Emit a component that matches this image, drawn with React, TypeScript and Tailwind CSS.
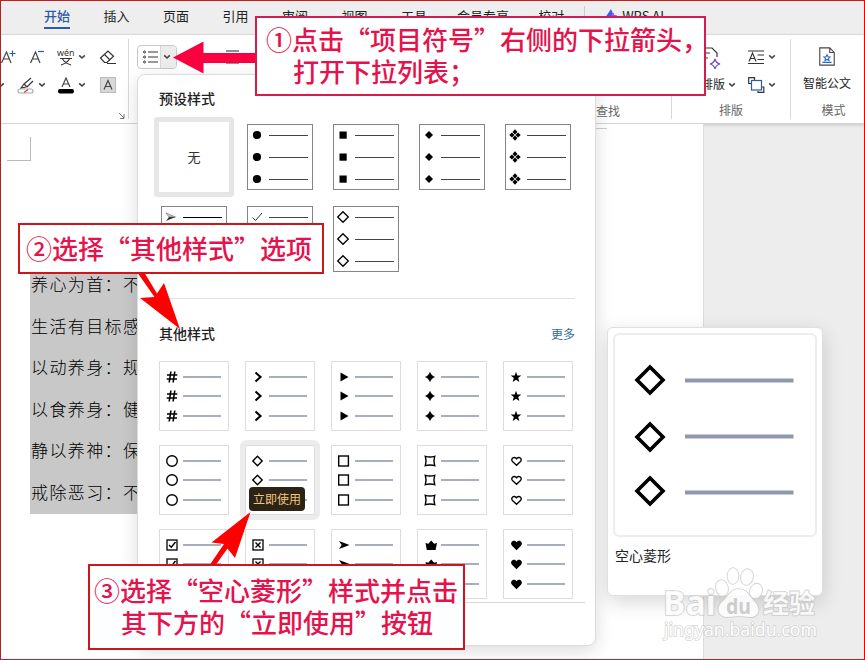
import React from "react";

const SANS = "font-['Noto_Sans_CJK_SC','Noto_Sans',sans-serif]";

function Chevron({ className = "" }: { className?: string }) {
  return (
    <svg className={`shrink-0 ${className}`} width="8" height="6" viewBox="0 0 8 6" fill="none" stroke="#444" strokeWidth="1.600">
      <path d="M1.200 1.300 4 4l2.800-2.700" />
    </svg>
  );
}

type Kind =
  | "disc" | "square" | "diamond" | "cluster" | "arrow" | "check" | "openDiamondLg"
  | "hash" | "angle" | "triangle" | "spark" | "star"
  | "ring" | "openDiamond" | "openSquare" | "bracket" | "heart"
  | "boxCheck" | "boxCross" | "dart" | "crown" | "heartFill";

function Bullet({ kind }: { kind: Kind }) {
  const line = { fill: "none", stroke: "#000", strokeWidth: 1.4 };
  const shapes: Record<Kind, React.ReactNode> = {
    disc: <circle cx="8" cy="8" r="4.100" />,
    square: <rect x="4.500" y="4.500" width="7.200" height="7.200" />,
    diamond: <path d="M8 4 12 8 8 12 4 8Z" />,
    cluster: <path d="M8 2.300 10.500 4.900 8 7.500 5.500 4.900ZM8 8.500l2.500 2.600L8 13.700l-2.500-2.600ZM4.900 5.500 7.500 8l-2.600 2.500L2.300 8ZM11.100 5.500 13.700 8l-2.600 2.500L8.500 8Z" />,
    arrow: (
      <>
        <path d="M3 4 12.500 8H6Z" fill="#ccc" stroke="#777" strokeWidth=".7" />
        <path d="M6 8h6.500L3 12Z" fill="#333" />
      </>
    ),
    check: <path d="m3.500 8.500 3 3L13 4" fill="none" stroke="#333" />,
    openDiamondLg: <path d="m8 2.700 5.300 5.300L8 13.300 2.700 8Z" {...line} strokeWidth="1.300" />,
    hash: <path d="M6.900 2.500 5.200 13.500M10.800 2.500 9.100 13.500M3 6h10.300M2.700 10h10.300" {...line} strokeWidth="1.600" />,
    angle: <path d="m5.500 3.500 5 4.500-5 4.500" {...line} strokeWidth="2.100" />,
    triangle: <path d="M4.500 3.500 12.500 8l-8 4.500Z" />,
    spark: <path d="M8 2.800q1.300 3.900 5.200 5.200Q9.300 9.300 8 13.200 6.700 9.300 2.800 8 6.700 6.700 8 2.800Z" />,
    star: <path d="m8 2.700 1.300 3.700 4 .1-3.100 2.500 1.100 4L8 10.700l-3.300 2.300 1.100-4-3.100-2.500 4-.1Z" />,
    ring: <circle cx="8" cy="8" r="5.300" {...line} />,
    openDiamond: <path d="m7.500 3.300 4.700 4.700-4.700 4.700L2.800 8Z" {...line} />,
    openSquare: <rect x="2.700" y="3" width="9.700" height="10" {...line} />,
    bracket: <path d="M3.300 3.300q4.700 1.500 9.400 0-1.500 4.700 0 9.400-4.700-1.500-9.400 0 1.500-4.700 0-9.400Z" {...line} />,
    heart: <path d="M8.500 12.300 4.500 8.500C2.200 6.200 5.900 2.500 8.500 5.700c2.600-3.200 6.300.5 4 2.800Z" {...line} />,
    boxCheck: (
      <g {...line}>
        <rect x="3" y="3" width="10" height="10" strokeWidth="1.300" />
        <path d="m5 8 2.300 2.300L11.500 5" />
      </g>
    ),
    boxCross: (
      <g {...line}>
        <rect x="3" y="3" width="10" height="10" strokeWidth="1.300" />
        <path d="m5.500 5.500 5 5m0-5-5 5" />
      </g>
    ),
    dart: <path d="M3 4 13.500 8 3 12l2.700-4Z" />,
    crown: <path d="m3.500 6 2.800.8L9.200 3.500 12.100 6.800 15 6l-1.400 7H4.800Z" />,
    heartFill: <path d="M8.500 13.300 4 8.700C1.200 5.800 5.500 1.700 8.500 5.200c3-3.500 7.300.6 4.500 3.500Z" />,
  };
  return (
    <svg width="16" height="16" viewBox="0 0 16 16" className="shrink-0">
      {shapes[kind]}
    </svg>
  );
}

function PresetCell({ kind, dark }: { kind: Kind; dark?: boolean }) {
  return (
    <div className="h-[66px] w-[66px] border border-[#858585] bg-white">
      {[0, 1, 2].map((i) => (
        <div key={i} className="flex h-[22px] items-center gap-1 pl-px first:-mt-px">
          <Bullet kind={kind} />
          <span className={`h-px w-[39px] ${dark ? "bg-black" : "bg-[#444]"}`} />
        </div>
      ))}
    </div>
  );
}

function StyleCell({ kind, active }: { kind: Kind; active?: boolean }) {
  return (
    <div className={`h-[70px] w-[70px] border border-[#dcdcde] bg-white pt-[5px] ${active ? "rounded-[1px] outline-[5px] outline-[#ececec]" : ""}`}>
      {[0, 1, 2].map((i) => (
        <div key={i} className="flex h-[19.500px] items-center gap-[3px] pl-1">
          <Bullet kind={kind} />
          <svg width="38" height="2" viewBox="0 0 38 2">
            <path d="M0 1h38" stroke="#8a94aa" strokeWidth="1.700" />
          </svg>
        </div>
      ))}
    </div>
  );
}

const TABS = ["开始", "插入", "页面", "引用", "审阅", "视图", "工具", "会员专享", "校对"];
const LINES = ["养心为首：不", "生活有目标感", "以动养身：规", "以食养身：健", "静以养神：保", "戒除恶习：不"];

const OTHER: Kind[] = [
  "hash", "angle", "triangle", "spark", "star",
  "ring", "openDiamond", "openSquare", "bracket", "heart",
  "boxCheck", "boxCross", "dart", "crown", "heartFill",
];

function TabBar() {
  return (
    <nav className="flex h-[35px] items-start border-b border-[#dedede] bg-[#eeeeee] pl-[44px] pt-[6px] text-[13px] leading-[20px] text-[#222]">
      {TABS.map((t, i) => (
        <span
          key={t}
          className={`h-[23px] shrink-0 whitespace-nowrap ${i === 0 ? "border-b-2 border-[#2c5aa8] font-medium text-[#2c5aa8]" : ""} ${i === 7 ? "ml-[30px]" : i === 8 ? "ml-[29px]" : i > 0 ? "ml-[33.500px]" : ""}`}
        >
          {t}
        </span>
      ))}
      <span className="ml-5 h-5 w-px bg-[#ccc]" />
      <svg className="ml-[19px] mt-[3px]" width="14" height="14" viewBox="0 0 14 14">
        <path d="M7 0 1 9h4l-1 5 2-1 1-6h3Z" fill="#385cf0" />
        <path d="m8 4-2 9h3l4-7h-3V4Z" fill="#a850ee" />
      </svg>
      <span className="ml-[4px]">WPS AI</span>
    </nav>
  );
}

function Ribbon() {
  return (
    <section className="flex h-[89px] border-b border-[#d4d4d4] bg-white pt-1 text-[12px] text-[#222] shadow-[0_1px_3px_rgba(0,0,0,0.18)]">
      {/* Font tools */}
      <div className="flex h-[80px] w-[129px] flex-col border-r border-[#d8d8d8] pt-[4px]">
        <div className="flex h-[28px] items-center">
          <svg width="17" height="16" viewBox="0 0 17 16" fill="none" stroke="#444" strokeWidth="1.200">
            <path d="m1.500 14 5-11 4.500 11M3.500 10h6" />
            <path d="M9.500 4.500h6M12.500 1.500v6" stroke="#2c5aa8" />
          </svg>
          <svg className="ml-[12px]" width="16" height="16" viewBox="0 0 16 16" fill="none" stroke="#444" strokeWidth="1.200">
            <path d="m1.500 14 5-11 4.500 11M3.500 10h6" />
            <path d="M9 2.500h6" stroke="#2c5aa8" />
          </svg>
          <svg className="ml-[12px] overflow-visible" width="18" height="18" viewBox="0 0 18 18" fill="none" stroke="#333" strokeWidth="1.100">
            <text x="0" y="8" fontSize="9" fill="#333" stroke="none" textLength="17.500" lengthAdjust="spacingAndGlyphs" className="font-['Noto_Sans']">wén</text>
            <path d="M3 10.500h12M5.500 11q2.500 4 8.500 6M12.500 11q-2.500 4-8.500 6" />
          </svg>
          <Chevron className="ml-[3px]" />
          <svg className="ml-[13px]" width="18" height="16" viewBox="0 0 18 16" fill="none" stroke="#333" strokeWidth="1.200">
            <path d="m1.500 9 7.500-7 5.500 5.200-6.500 6.300H5.500Z" />
            <path d="m5.500 5.500 5.500 5.500M8 14.500h9" />
          </svg>
        </div>
        <div className="flex h-[28px] items-center">
          <Chevron className="-ml-[3px]" />
          <svg className="ml-[12px]" width="18" height="17" viewBox="0 0 18 17" fill="none" stroke="#333" strokeWidth="1.200">
            <path d="m14 1-7 6 3 3 6-6M7 7l-3 4 5-1" />
            <rect x="1" y="12" width="15" height="4" rx="2" stroke="#aaa" />
            <path d="m7 15.500 4-3" stroke="#e33" />
          </svg>
          <Chevron className="ml-[3px]" />
          <svg className="ml-[12px]" width="16" height="17" viewBox="0 0 16 17" fill="none" stroke="#444" strokeWidth="1.200">
            <path d="m4 10 4-9 4 9M5.500 7h5" />
            <rect x="0" y="12" width="16" height="4.500" rx="2" fill="#000" stroke="none" />
          </svg>
          <Chevron className="ml-[4px]" />
          <svg className="ml-[14px]" width="16" height="16" viewBox="0 0 16 16" fill="none" stroke="#444" strokeWidth="1.200">
            <rect x=".5" y=".5" width="15" height="15" fill="#d8d8d8" stroke="#bbb" strokeWidth="1" />
            <path d="m4 12.500 4-9 4 9M5.500 9.500h5" />
          </svg>
        </div>
        <svg className="ml-[119px] mt-[14px]" width="6" height="6" viewBox="0 0 6 6" fill="none" stroke="#777">
          <path d="m0 0 5 5M5 1v4.500H1" />
        </svg>
      </div>

      {/* Paragraph tools */}
      <div className="flex h-[80px] w-[543px] border-r border-[#d8d8d8] pl-[8px] pt-[6px]">
        <div className="flex h-[24px] w-[40px] shrink-0 overflow-hidden rounded-[4px] border border-[#c8c8c8]">
          <span className="flex w-[23px] items-center justify-center border-r border-[#d8d8d8] pl-[3px]">
            <svg width="16" height="14" viewBox="0 0 16 14" fill="none" stroke="#333">
              <path d="M5 2h10M5 7h10M5 12h10" strokeWidth="1.200" />
              <circle cx="1.500" cy="2" r="1" />
              <circle cx="1.500" cy="7" r="1" />
              <circle cx="1.500" cy="12" r="1" />
            </svg>
          </span>
          <span className="flex grow items-center justify-center bg-[#ececec] pr-[3px]">
            <Chevron />
          </span>
        </div>
        <svg className="ml-[49px] mt-[5px] shrink-0" width="14" height="14" viewBox="0 0 14 14" stroke="#222" strokeWidth="1.200">
          <path d="M0 1h13M2 7h9M0 13h13" />
        </svg>
        <span className="ml-[356px] mt-[57px] text-[12px] leading-[18px] text-[#666]">查找</span>
      </div>

      {/* Typesetting */}
      <div className="flex h-[80px] w-[119px] flex-col border-r border-[#d8d8d8]">
        <div className="flex h-[60px]">
          <div className="flex w-[52px] flex-col items-end">
            <svg className="mr-[3px] mt-[8px]" width="20" height="22" viewBox="0 0 20 22" fill="none" stroke="#333" strokeWidth="1.200">
              <path d="M2 1h9l5 5v4M2 6h7M2 11h5M2 21V1" />
              <path d="M14 12q1 4 5 5-4 1-5 5-1-4-5-5 4-1 5-5Z" stroke="#6b43d0" />
            </svg>
            <span className="-mr-[1px] mt-[6px] whitespace-nowrap leading-[18px]">智能排版</span>
          </div>
          <Chevron className="ml-[4px] mt-[43px]" />
          <div className="ml-[12px] mt-[10px] flex flex-col gap-[12px]">
            <div className="flex items-center gap-[3px]">
              <svg width="17" height="16" viewBox="0 0 17 16" fill="none" stroke="#333" strokeWidth="1.100">
                <path d="M0 2h16M0 14.500h16M1 12.500l3.500-8.500L8 12.500M2.300 9.500h4.500M9.500 6H16M9.500 10.500H16" />
              </svg>
              <Chevron />
            </div>
            <div className="flex items-center gap-[3px]">
              <svg width="17" height="16" viewBox="0 0 17 16" fill="none" stroke="#333" strokeWidth="1.200">
                <path d="M3 6.500H.7V.7h5.800V3M10 14v1.300h5.800V10H14" />
                <rect x="3.500" y="3.500" width="10" height="9.500" stroke="#2c5aa8" />
              </svg>
              <Chevron />
            </div>
          </div>
        </div>
        <span className="mt-[4px] text-center leading-[18px] text-[#666]">排版</span>
      </div>

      {/* Mode */}
      <div className="flex h-[80px] w-[73px] flex-col items-center pr-px">
        <svg className="mt-[8px]" width="18" height="21" viewBox="0 0 18 21" fill="none" stroke="#444" strokeWidth="1.200">
          <path d="M1 1h11l5 5v14H1ZM12 1v5h5" />
          <path d="m9 8.500 1.100 2.200 2.400.3-1.800 1.600.5 2.400L9 13.800 6.800 15l.5-2.400L5.500 11l2.400-.3ZM4 17h10" stroke="#2864c8" />
        </svg>
        <span className="mt-[8px] leading-[18px]">智能公文</span>
        <span className="mt-[9px] pl-[13px] leading-[18px] text-[#666]">模式</span>
      </div>
    </section>
  );
}

function Document() {
  return (
    <main className="flex h-[536px]">
      <div className="flex w-[704px] flex-col border-r border-[#ddd] bg-white">
        <div className="ml-[7px] mt-[13px] h-[24px] w-[24px] shrink-0 border-b border-r border-[#bbb]" />
        <div className="ml-[30px] mt-[104px] h-[249px] w-[130px] bg-[#c8c8c8] pl-px pt-[3px] text-[17px] font-light text-black">
          {LINES.map((l) => (
            <p key={l} className="h-[41.600px] whitespace-nowrap leading-[32px] tracking-[1.400px]">
              {l}
            </p>
          ))}
        </div>
      </div>
    </main>
  );
}

function BulletMenu() {
  return (
    <div className="absolute left-[137px] top-[74px] flex h-[572px] w-[459px] flex-col rounded-[8px] border border-[#dcdcdc] bg-white shadow-[0_5px_18px_rgba(0,0,0,0.14)]">
      <h2 className="ml-[21px] mt-[13px] text-[14px] font-medium leading-[20px] text-[#222]">预设样式</h2>
      <div className="ml-[16px] mt-[9px] flex">
        <div className="flex h-[80px] w-[80px] items-center justify-center rounded-[3px] border-[5px] border-[#e6e6e6] text-[13px] text-[#333]">无</div>
        <div className="ml-[13px] mt-[7px] flex gap-5">
          <PresetCell kind="disc" />
          <PresetCell kind="square" />
          <PresetCell kind="diamond" />
          <PresetCell kind="cluster" />
        </div>
      </div>
      <div className="ml-[23px] mt-[9px] flex gap-5">
        <PresetCell kind="arrow" dark />
        <PresetCell kind="check" />
        <PresetCell kind="openDiamondLg" />
      </div>
      <hr className="ml-[21px] mt-[26px] w-[416px] border-[#e2e2e2]" />
      <div className="ml-[21px] mt-[24px] flex w-[416px] justify-between leading-[20px]">
        <h2 className="text-[14px] font-medium text-[#222]">其他样式</h2>
        <a className="pt-px text-[12px] leading-[20px] text-[#2f6c9c]">更多</a>
      </div>
      <div className="ml-[21px] mt-[17px] grid w-[414px] grid-cols-5 gap-x-4 gap-y-[14px]">
        {OTHER.map((k) => (
          <StyleCell key={k} kind={k} active={k === "openDiamond"} />
        ))}
      </div>
      <hr className="ml-[21px] mt-[3px] w-[426px] border-[#d8d8d8]" />
      <span className="absolute left-[111px] top-[412px] flex h-[24px] w-[56px] items-center justify-center rounded-[4px] bg-[#2c2315] text-[12px] text-[#efc580]">
        立即使用
      </span>
    </div>
  );
}

function Preview() {
  return (
    <div className="absolute left-[607px] top-[327px] h-[269px] w-[216px] rounded-[6px] border border-[#e0e0e0] bg-white p-[5px] shadow-[0_6px_20px_rgba(0,0,0,0.16)]">
      <div className="h-[204px] rounded-[6px] border-2 border-[#ededed]">
        <svg width="200" height="200" viewBox="0 0 200 200" fill="none">
          {[
            [45, 45],
            [102, 101],
            [156, 157],
          ].map(([d, l]) => (
            <g key={d}>
              <path d={`M35 ${d - 13}l13 13-13 13-13-13Z`} stroke="#000" strokeWidth="3.600" />
              <path d={`M70 ${l + 0.5}h108.500`} stroke="#8f97ad" strokeWidth="4" />
            </g>
          ))}
        </svg>
      </div>
      <p className="ml-[2px] mt-[8px] text-[14px] leading-[20px] text-[#222]">空心菱形</p>
    </div>
  );
}

function Arrows() {
  return (
    <svg className="absolute left-0 top-0" width="865" height="660" viewBox="0 0 865 660">
      <path d="M173 57.500 203.500 41.500V53H257v10h-53.500v10.500Z" fill="#fb0040" />
      <path d="M137 272h7l13 21.500L164 283l16 46-40-31 14.500-1Z" fill="#fe0000" />
      <path d="m250.500 512-15.500 46-7.500-9.500L215 566h-6l15-22-12.500-1.500Z" fill="#fe0000" />
    </svg>
  );
}

function Watermark() {
  return (
    <svg className="absolute left-[655px] top-[560px]" width="175" height="90" viewBox="0 0 175 90" fill="#fff" fillOpacity=".85" stroke="#c4c4c4" strokeOpacity=".8" strokeWidth="1.600" paintOrder="stroke">
      <text x="8" y="55" fontSize="34" fontWeight="700" className="font-['Noto_Sans',sans-serif]" textLength="53" lengthAdjust="spacingAndGlyphs">Bai</text>
      <ellipse cx="67" cy="28" rx="6" ry="8" transform="rotate(-12 67 28)" />
      <ellipse cx="78" cy="16" rx="5.500" ry="8" />
      <ellipse cx="92" cy="17" rx="6" ry="8" transform="rotate(12 92 17)" />
      <ellipse cx="101" cy="31" rx="6" ry="7.500" transform="rotate(20 101 31)" />
      <path d="M84 29c-9 0-11 8-17 13-7 7-3 16 7 15 7-1 13-1 20 0 9 1 13-7 6-15-5-5-8-13-16-13Z" />
      <text x="71" y="54" fontSize="22" fontWeight="700" fill="#c4c4c4" stroke="none" className="font-['Noto_Sans',sans-serif]" textLength="25" lengthAdjust="spacingAndGlyphs">du</text>
      <text x="108" y="53" fontSize="26" fontWeight="700" className="font-['Noto_Sans_CJK_SC',sans-serif]">经验</text>
      <text x="9" y="76" fontSize="18" fillOpacity="1" strokeOpacity=".7" strokeWidth="1.600" className="font-['Noto_Sans',sans-serif]" textLength="153" lengthAdjust="spacingAndGlyphs">jingyan.baidu.com</text>
    </svg>
  );
}

export default function App() {
  return (
    <div lang="zh-CN" className={`relative h-[660px] w-[865px] overflow-hidden bg-[#ededed] ${SANS}`}>
      <TabBar />
      <Ribbon />
      <Document />
      <span className="absolute left-[596px] top-[128px] h-px w-[11px] bg-[#ccc]" />
      <BulletMenu />
      <Preview />
      <Arrows />
      <div className="absolute left-[255px] top-[16px] h-[80px] w-[451px] whitespace-nowrap border-2 border-[#d51c4c] bg-white pl-[9px] pt-[5px] text-[26px] font-medium leading-[31.500px] text-[#e6124b]">
        <p>①点击“项目符号”右侧的下拉箭头，</p>
        <p className="pl-[27px]">打开下拉列表；</p>
      </div>
      <div className="absolute left-[18px] top-[223px] h-[51px] w-[306px] whitespace-nowrap border-2 border-[#cb171b] bg-white pl-[6px] pt-[7px] text-[26px] font-medium leading-[32px] text-[#e6124b]">
        ②选择“其他样式”选项
      </div>
      <div className="absolute left-[88px] top-[564px] h-[86px] w-[377px] whitespace-nowrap border-2 border-[#cb171b] bg-[#fcfeff] pl-[4px] pt-[8px] text-[26px] font-medium leading-[31.500px] text-[#e6124b]">
        <p>③选择“空心菱形”样式并点击</p>
        <p className="pl-[27px]">其下方的“立即使用”按钮</p>
      </div>
      <Watermark />
      <div className="pointer-events-none absolute inset-0 border border-b-[#c02020] border-l-[#b52020] border-r-[#f50000] border-t-[#c22020]" />
    </div>
  );
}
